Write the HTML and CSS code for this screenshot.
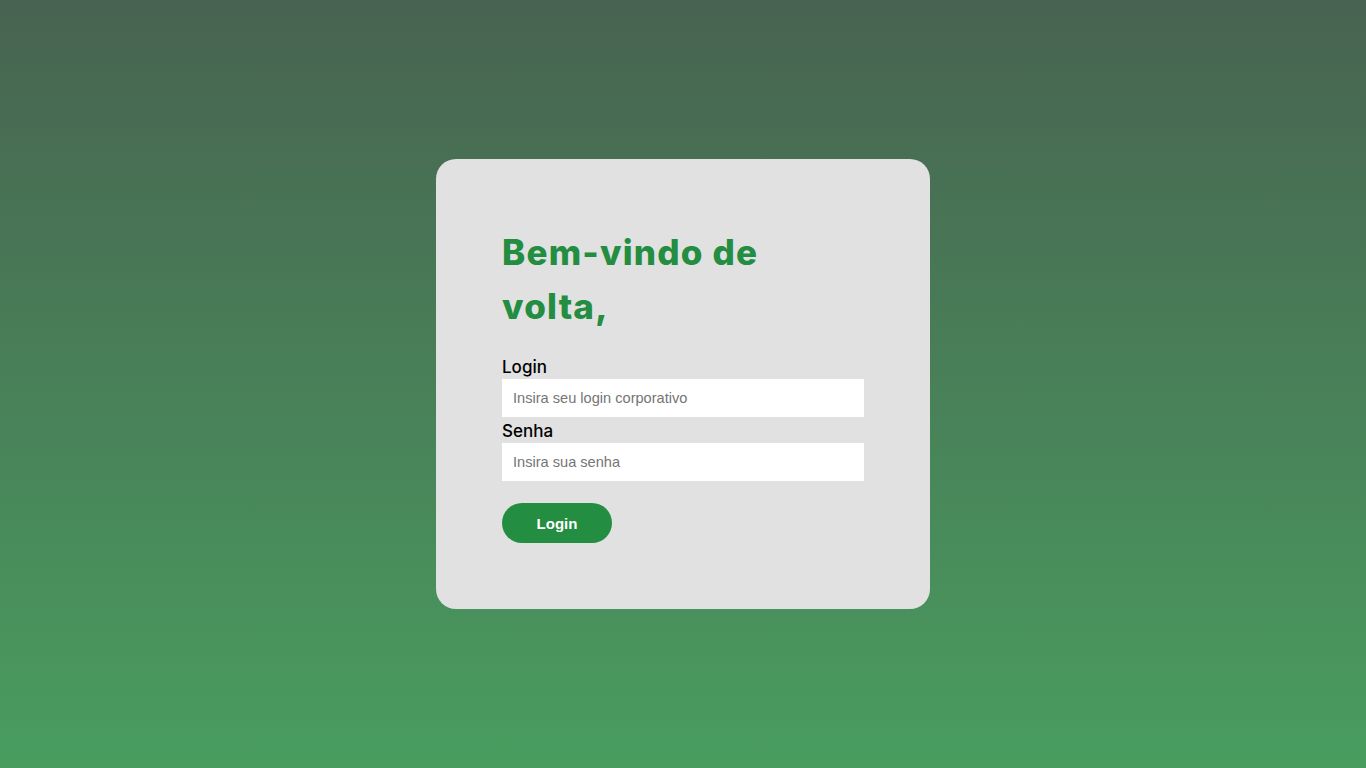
FILE: index.html
```html
<!DOCTYPE html>
<html lang="pt-BR">
<head>
<meta charset="utf-8">
<title>Login</title>
<link rel="stylesheet" href="styles.css">
</head>
<body>
<main class="card">
  <h1 class="title">Bem-vindo de volta,</h1>
  <form class="form">
    <label class="label" for="login">Login</label>
    <input class="field" id="login" type="text" placeholder="Insira seu login corporativo">
    <label class="label" for="senha">Senha</label>
    <input class="field" id="senha" type="password" placeholder="Insira sua senha">
    <button class="btn" type="button">Login</button>
  </form>
</main>
</body>
</html>
```

FILE: styles.css
```css
* { box-sizing: border-box; }
html, body { height: 100%; }
body {
  margin: 0;
  min-height: 100vh;
  display: flex;
  align-items: center;
  justify-content: center;
  background: linear-gradient(180deg, #486351 0%, #499d5f 100%);
  font-family: "Liberation Sans", Arial, sans-serif;
}
.card {
  width: 494px;
  background: #e1e1e1;
  border-radius: 20px;
  padding: 66px;
}
.title {
  margin: 0 0 22px;
  max-width: 300px;
  font-family: Inter, "Open Sans", sans-serif;
  font-weight: 800;
  font-size: 35px;
  line-height: 54px;
  letter-spacing: 1.2px;
  color: #238d41;
}
.form {
  display: flex;
  flex-direction: column;
  align-items: flex-start;
}
.label {
  font-family: Inter, "Open Sans", sans-serif;
  font-weight: 500;
  font-size: 17px;
  line-height: 24px;
  color: #000;
}
.field {
  width: 100%;
  height: 38px;
  border: none;
  outline: none;
  background: #fff;
  padding: 0 11px;
  font-family: "Liberation Sans", Arial, sans-serif;
  font-size: 14.6px;
  color: #222;
  margin-bottom: 2px;
}
.field::placeholder { color: #757575; }
.btn {
  margin-top: 20px;
  width: 110px;
  height: 40px;
  border: none;
  border-radius: 20px;
  background: #238d41;
  color: #fff;
  font-family: "Liberation Sans", Arial, sans-serif;
  font-weight: 700;
  font-size: 15px;
  cursor: pointer;
}
```
